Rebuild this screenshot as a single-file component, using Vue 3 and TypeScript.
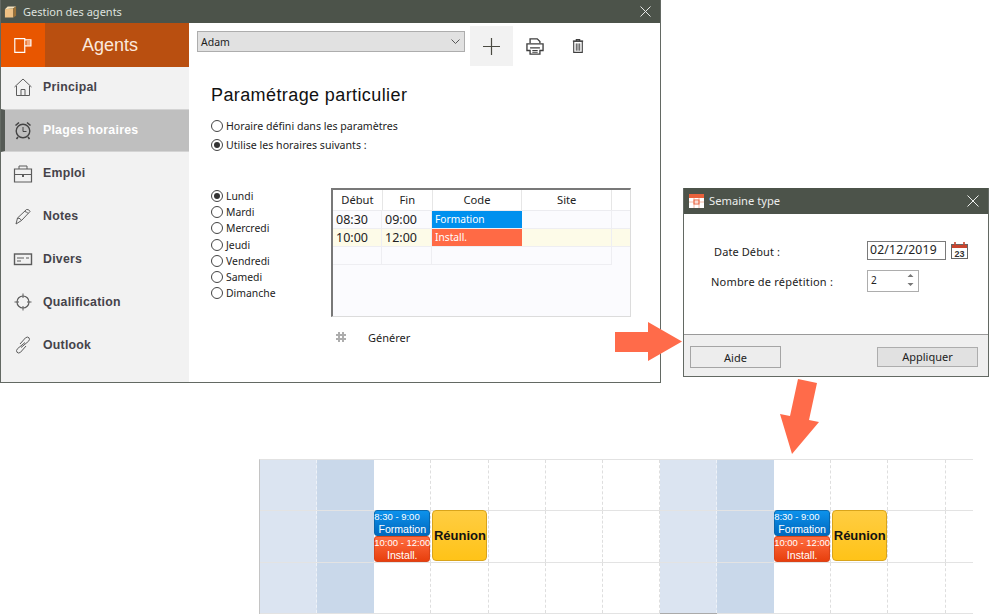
<script setup lang="ts">
interface NavItem { label: string; icon: string; active?: boolean }
const nav: NavItem[] = [
  { label: 'Principal', icon: 'home' },
  { label: 'Plages horaires', icon: 'clock', active: true },
  { label: 'Emploi', icon: 'case' },
  { label: 'Notes', icon: 'pen' },
  { label: 'Divers', icon: 'card' },
  { label: 'Qualification', icon: 'target' },
  { label: 'Outlook', icon: 'link' },
]
const modes = [
  { label: 'Horaire défini dans les paramètres', on: false },
  { label: 'Utilise les horaires suivants :', on: true },
]
const days = ['Lundi', 'Mardi', 'Mercredi', 'Jeudi', 'Vendredi', 'Samedi', 'Dimanche']
const rows = [
  { start: '08:30', end: '09:00', code: 'Formation', kind: 'blue', tint: false },
  { start: '10:00', end: '12:00', code: 'Install.', kind: 'orange', tint: true },
  { start: '', end: '', code: '', kind: '', tint: false },
]
const cols = Array.from({ length: 14 }, (_, i) => i)
const weekendA = new Set([0, 7])
const weekendB = new Set([1, 8])
const eventCols = new Set([2, 9])
const meetingCols = new Set([3, 10])
const gridRows = [0, 1, 2]
</script>

<template>
  <div class="desk">
    <section class="win main">
      <header class="bar">
        <svg class="bar-ico" width="13" height="14" viewBox="0 0 14 14">
          <path d="M1 4 L10 3 V13 L1 13 Z" fill="#eec184" />
          <path d="M1 4 L4 1 L13 1 L10 3 Z" fill="#f6e3bd" />
          <path d="M10 3 L13 1 V11 L10 13 Z" fill="#9c7238" />
        </svg>
        <span class="bar-title small">Gestion des agents</span>
        <svg class="close" width="11" height="11" viewBox="0 0 11 11"><path d="M.5.5l10 10M10.5.5l-10 10" stroke="#e6e8e6" stroke-width="1" fill="none" /></svg>
      </header>
      <div class="main-body">
        <aside class="side">
          <div class="brand">
            <div class="brand-ico">
              <svg width="18" height="15" viewBox="0 0 20 17" fill="none" stroke="#fff" stroke-width="1.3">
                <path d="M.7.7H12V16.3H.7ZM12 2.2H19V9H12M14 4.5H19M14 6.8H19" />
              </svg>
            </div>
            <div class="brand-name">Agents</div>
          </div>
          <div v-for="n in nav" :key="n.label" class="nav" :class="{ active: n.active }">
            <span class="nav-ico">
              <svg width="22" height="22" viewBox="0 0 22 22" fill="none" stroke="#5c5c5c" stroke-width="1">
                <template v-if="n.icon === 'home'">
                  <path d="M2.5 11 L11 3 L19.5 11" />
                  <path d="M4.5 10 V19.5 H17.5 V10" />
                  <path d="M9 19.5 V13.5 H13 V19.5" />
                </template>
                <template v-else-if="n.icon === 'clock'">
                  <circle cx="11" cy="12" r="6.8" stroke-width="1.4" stroke="#444" />
                  <path d="M11 8 V12.5 H14.5" stroke="#444" />
                  <path d="M3.5 6.5 L7 3.5 M18.5 6.5 L15 3.5 M6 18 L4.5 20 M16 18 L17.5 20" stroke-width="1.6" stroke="#444" />
                </template>
                <template v-else-if="n.icon === 'case'">
                  <path d="M2.5 7 H19.5 V20 H2.5 Z M2.5 12.5 H19.5" stroke-width="1.2" />
                  <path d="M7 7 V4 H15 V7" />
                  <path d="M10 14 H12" stroke-width="2" />
                </template>
                <template v-else-if="n.icon === 'pen'">
                  <path d="M4 19 L5.5 13 L14.5 4.5 Q17 4 18 6.5 L9.5 15.5 Z" />
                  <path d="M5.5 13 Q8.5 13 9.5 15.5 M12.5 6.5 Q15 6.5 16 8.5" />
                </template>
                <template v-else-if="n.icon === 'card'">
                  <rect x="2.5" y="6" width="17" height="10.5" stroke-width="1.4" />
                  <path d="M5 10 H12 M14 10 H17 M5 13 H9" />
                </template>
                <template v-else-if="n.icon === 'target'">
                  <circle cx="11" cy="11" r="6" stroke-width="1.2" />
                  <path d="M11 2.5 V7 M11 15 V19.5 M2.5 11 H7 M15 11 H19.5" />
                </template>
                <template v-else>
                  <path d="M8 10 L13.5 3.8 Q15.5 2.3 17 3.8 Q18.2 5.4 16.5 7.3 L9 13.5" />
                  <path d="M14 12 L8.5 18.3 Q6.5 19.8 5 18.3 Q3.8 16.6 5.5 14.7 L13 8.5" />
                </template>
              </svg>
            </span>
            <span class="nav-label">{{ n.label }}</span>
          </div>
        </aside>
        <div class="content">
          <div class="toolbar">
            <div class="select">
              <span class="adam dark">Adam</span>
              <svg width="9" height="5" viewBox="0 0 9 5"><path d="M.5.5l4 4 4-4" stroke="#555" fill="none" /></svg>
            </div>
            <button class="tool plus">
              <svg width="17" height="17" viewBox="0 0 17 17"><path d="M8.5 0V17M0 8.5H17" stroke="#4a4a42" stroke-width="1.2" /></svg>
            </button>
            <button class="tool">
              <svg width="18" height="17" viewBox="0 0 20 19" fill="none" stroke="#3f3f3f" stroke-width="1.5">
                <path d="M4.5 6 V1 H12.5 L15.5 4 V6" />
                <path d="M1 6.5 H19 V14 H15.5 V18 H4.5 V14 H1 Z" />
                <path d="M4.5 11 H15.5 M7 14 H13 M7 16 H13" stroke-width="1.2" />
              </svg>
            </button>
            <button class="tool">
              <svg width="12" height="16" viewBox="0 0 14 17" fill="none" stroke="#3f3f3f" stroke-width="1.3">
                <path d="M1 2.8 H13 M5 2.5 V1 H9 V2.5" />
                <path d="M2 3 V16 H12 V3 Z" />
                <path d="M5 5.5 V14 M7 5.5 V14 M9 5.5 V14" stroke-width="1.1" />
              </svg>
            </button>
          </div>
          <h1 class="heading">Paramétrage particulier</h1>
          <div class="modes">
            <label v-for="m in modes" :key="m.label" class="radio">
              <span class="dot" :class="{ on: m.on }"></span>{{ m.label }}
            </label>
          </div>
          <div class="split">
            <div class="days">
              <label v-for="(d, i) in days" :key="d" class="radio day">
                <span class="dot" :class="{ on: i === 0 }"></span>{{ d }}
              </label>
            </div>
            <div class="right">
              <div class="table">
                <div class="thead">
                  <div class="th c1">Début</div>
                  <div class="th c2">Fin</div>
                  <div class="th c3">Code</div>
                  <div class="th c4">Site</div>
                  <div class="th c5"></div>
                </div>
                <div v-for="(r, i) in rows" :key="i" class="tr" :class="{ tint: r.tint }">
                  <div class="td d1">{{ r.start }}</div>
                  <div class="td c2">{{ r.end }}</div>
                  <div class="td c3 code" :class="r.kind">{{ r.code }}</div>
                  <div class="td c4"></div>
                  <div v-if="i < 2" class="td c5 last"></div>
                </div>
              </div>
              <div class="gen">
                <svg width="12" height="12" viewBox="0 0 12 12" fill="none" stroke="#adadad" stroke-width="2">
                  <path d="M4 1V11M8 1V11M1 4H11M1 8H11" />
                </svg>
                <span class="small dark">Générer</span>
              </div>
            </div>
          </div>
        </div>
      </div>
    </section>

    <section class="win dialog">
      <header class="bar dbar">
        <svg class="bar-ico" width="15" height="14" viewBox="0 0 15 14">
          <rect width="15" height="14" fill="#fff" />
          <rect width="15" height="4" fill="#e8613c" />
          <path d="M0 8H15M5 4V14M10 4V14" stroke="#f0b7a5" />
          <rect x="5" y="6" width="5" height="4" fill="none" stroke="#e8613c" />
        </svg>
        <span class="dbar-title">Semaine type</span>
        <svg class="close" width="12" height="12" viewBox="0 0 12 12"><path d="M.5.5l11 11M11.5.5l-11 11" stroke="#eef0ee" stroke-width="1" fill="none" /></svg>
      </header>
      <div class="dbody">
        <div class="drow first">
          <span class="dlabel l1">Date Début :</span>
          <span class="date">02/12/2019</span>
          <svg class="cal" width="17" height="17" viewBox="0 0 17 17">
            <rect x=".5" y="2.5" width="16" height="14" fill="#fff" stroke="#666" />
            <rect x="1" y="3" width="15" height="3" fill="#c8452f" />
            <path d="M4 0V3M13 0V3" stroke="#c8452f" stroke-width="1.6" />
            <text x="8.5" y="15" text-anchor="middle" class="cal-num">23</text>
          </svg>
        </div>
        <div class="drow second">
          <span class="dlabel l2">Nombre de répétition :</span>
          <span class="spin">
            <span>2</span>
            <svg width="7" height="14" viewBox="0 0 7 14"><path d="M3.5 1L6.5 4H.5ZM3.5 13L.5 10H6.5Z" fill="#777" /></svg>
          </span>
        </div>
      </div>
      <footer class="dfoot">
        <button class="btn aide">Aide</button>
        <button class="btn apply">Appliquer</button>
      </footer>
    </section>

    <svg class="arrows" width="1000" height="615" viewBox="0 0 1000 615">
      <path d="M615 332H648V322L682 341.5L648 361V352H615Z" fill="#ff6b4a" />
      <path d="M798 379L817 383L809 420L819 422L792 454L780 414L790 416Z" fill="#ff6b4a" />
    </svg>

    <div class="cal-grid">
      <div v-for="r in gridRows" :key="r" class="grow" :class="'r' + r">
        <div
          v-for="c in cols"
          :key="c"
          class="gcell"
          :class="{ wa: weekendA.has(c), wb: weekendB.has(c), edge: r === 2 && c === 7 }"
        >
          <div v-if="r === 1 && eventCols.has(c)" class="events">
            <div class="ev blue">
              <span class="t">8:30 - 9:00</span>
              <span>Formation</span>
            </div>
            <div class="ev orange">
              <span class="t">10:00 - 12:00</span>
              <span>Install.</span>
            </div>
          </div>
          <div v-if="r === 1 && meetingCols.has(c)" class="meeting">Réunion</div>
        </div>
      </div>
    </div>
  </div>
</template>

<style>
html, body { margin: 0; background: #fff; }
</style>

<style scoped>
.desk { position: relative; width: 1000px; height: 615px; overflow: hidden; background: #fff; font-family: "Noto Sans", sans-serif; }
.win { position: absolute; box-sizing: border-box; border: 1px solid #636963; border-top: 0; background: #fff; display: flex; flex-direction: column; }
.main { left: 0; top: 0; width: 661px; height: 383px; }
.dialog { left: 683px; top: 188px; width: 306px; height: 189px; }
.arrows { position: absolute; left: 0; top: 0; pointer-events: none; }
.bar { height: 23px; flex: none; background: #4c534a; display: flex; align-items: center; padding: 0 9px 0 3px; }
.bar-ico { margin-right: 6px; }
.bar-title { color: #dfe2df; font-size: 10.5px; }
.close { margin-left: auto; }
.small { font-size: 11px; }
.adam { font-size: 10.5px; }
.dark { color: #1c1c1c; }
.main-body { flex: 1; display: flex; min-height: 0; }
.side { width: 188px; flex: none; background: #f2f2f2; display: flex; flex-direction: column; }
.brand { height: 44px; display: flex; margin-bottom: -1px; }
.brand-ico { width: 44px; background: #e85600; display: flex; align-items: center; justify-content: center; }
.brand-name { flex: 1; background: #b94f10; color: #fbe9dd; font: 18px/45px "Liberation Sans", sans-serif; text-align: center; padding-right: 14px; }
.nav { height: 43px; flex: none; box-sizing: border-box; display: flex; align-items: center; padding: 0 0 1px 11px; }
.nav.active { background: #bfbfbf; border-left: 4px solid #555a55; padding: 0 0 2px 7px; border-top: 1px solid #d4d4d4; border-bottom: 1px solid #d4d4d4; }
.nav-ico { width: 22px; height: 22px; margin-right: 9px; display: block; }
.nav-label { font: bold 12.3px "Liberation Sans", sans-serif; letter-spacing: .25px; color: #45434a; }
.nav.active .nav-label { color: #fff; }
.content { flex: 1; min-width: 0; padding-left: 8px; display: flex; flex-direction: column; }
.toolbar { display: flex; align-items: flex-start; height: 43px; padding-top: 3px; box-sizing: border-box; }
.select { width: 268px; height: 21px; margin-top: 5px; box-sizing: border-box; background: #e1e1e1; border: 1px solid #adadad; display: flex; align-items: center; justify-content: space-between; padding: 0 4px 0 3px; }
.tool { width: 43px; height: 40px; border: 0; padding: 0; background: none; display: flex; align-items: center; justify-content: center; }
.plus { margin-left: 5px; background: #f2f2f2; }
.heading { margin: 17px 0 0 14px; font: 400 18px/24px "Liberation Sans", sans-serif; color: #111; letter-spacing: .4px; }
.modes { margin: 11px 0 0 14px; display: flex; flex-direction: column; gap: 3px; }
.radio { display: flex; align-items: center; height: 16px; font-size: 10.6px; color: #222; }
.dot { width: 10px; height: 10px; border: 1px solid #444; border-radius: 50%; margin-right: 3px; position: relative; flex: none; background: #fff; }
.dot.on::after { content: ""; position: absolute; inset: 2px; border-radius: 50%; background: #333; }
.split { display: flex; margin-top: 35px; }
.days { margin: 0 0 0 14px; width: 120px; display: flex; flex-direction: column; }
.day { height: 16.2px; font-size: 10.4px; }
.right { display: flex; flex-direction: column; }
.table { width: 300px; height: 129px; box-sizing: border-box; border: 2px solid #787878; border-right: 1px solid #dcdcdc; border-bottom: 1px solid #dcdcdc; background: #fbfbfe; font-size: 11.2px; color: #222; }
.thead { display: flex; height: 21px; background: #fff; border-bottom: 1px solid #ececf0; box-sizing: border-box; }
.th { box-sizing: border-box; text-align: center; line-height: 19px; border-right: 1px solid #e6e6e6; }
.c1 { width: 50px; }
.d1 { width: 49px; }
.c2 { width: 50px; }
.c3 { width: 90px; }
.c4 { width: 90px; }
.c5 { width: 18px; }
.th.c5 { border-right: 0; }
.tr { display: flex; height: 18px; box-sizing: border-box; }
.tr.tint { background: #fdfbe8; }
.td { box-sizing: border-box; border-right: 1px solid #eeeef2; border-bottom: 1px solid #eeeef2; padding-left: 3px; font-size: 12.5px; line-height: 17px; }
.td.last { border-right: 0; }
.code { color: #fff; font-size: 10.2px; line-height: 16px; border-right: 0; }
.code.blue { background: #0090ee; }
.code.orange { background: #ff6a45; }
.gen { display: flex; align-items: center; height: 16px; margin: 12px 0 0 4px; }
.gen span { margin-left: 21px; }
.dbar { height: 26px; padding: 0 9px 1px 5px; box-sizing: border-box; }
.dbar .bar-ico { margin-right: 5px; }
.dbar-title { color: #eceeec; font-size: 11.2px; }
.dbody { flex: 1; position: relative; display: flex; flex-direction: column; }
.drow { display: flex; align-items: center; font-size: 11px; color: #222; }
.first { margin-top: 27px; height: 19px; }
.second { margin-top: 10px; height: 22px; }
.dlabel { display: block; letter-spacing: .1px; }
.l1 { margin-left: 30px; width: 153px; padding-top: 1px; }
.l2 { margin-left: 27px; width: 156px; letter-spacing: .2px; }
.date { width: 79px; height: 19px; box-sizing: border-box; border: 1px solid #7a7a7a; padding-left: 2px; line-height: 16px; font-size: 12.2px; letter-spacing: .2px; }
.cal { margin-left: 5px; }
.cal-num { font: bold 9px "Liberation Sans", sans-serif; fill: #333; }
.spin { width: 52px; height: 22px; box-sizing: border-box; border: 1px solid #adadad; display: flex; align-items: center; justify-content: space-between; padding: 0 4px 2px 3px; font-size: 10px; }
.dfoot { height: 42px; flex: none; box-sizing: border-box; background: #efefef; border-top: 1px solid #9a9a9a; position: relative; display: flex; justify-content: space-between; padding: 11px 10px 0 6px; align-items: flex-start; }
.btn { box-sizing: border-box; font: 11px "Noto Sans", sans-serif; color: #222; padding: 0; }
.aide { width: 91px; height: 22px; background: #ededed; border: 1px solid #a5a5a5; }
.apply { width: 101px; height: 20px; margin-top: 1px; padding-bottom: 2px; background: #e1e1e1; border: 1px solid #adadad; }
.cal-grid { position: absolute; left: 259px; top: 459px; width: 714px; height: 155px; overflow: hidden; border-top: 1px solid #e2e2e2; border-left: 1px solid #c4c4c4; box-sizing: border-box; }
.grow { display: flex; box-sizing: border-box; border-bottom: 1px solid #e3e3e3; }
.r0 { height: 51px; }
.r1 { height: 52px; }
.r2 { height: 51px; }
.gcell { width: 57.14px; flex: none; box-sizing: border-box; border-right: 1px dashed #dedede; position: relative; }
.wa { background: #dbe4f1; border-right-color: #eef2f8; }
.wb { background: #c9d8ea; border-right-color: #c9d8ea; }
.edge { box-shadow: 0 1px 0 #aaa; }
.events { position: absolute; left: 0; top: -1px; width: 56px; height: 52px; z-index: 1; display: flex; flex-direction: column; }
.ev { height: 26px; box-sizing: border-box; border-radius: 3px; color: #fff; font: 10.6px/12px "Liberation Sans", sans-serif; text-align: center; display: flex; flex-direction: column; white-space: nowrap; }
.ev .t { font-size: 9.5px; line-height: 12px; text-align: left; margin: 0 -1px; }
.ev.blue { background: linear-gradient(#0c92ec, #0068be); border: 1px solid #0a68ac; }
.ev.orange { background: linear-gradient(#ff6d40, #e73f0d); border: 1px solid #d9441a; }
.meeting { position: absolute; left: 1px; top: -1px; width: 55px; height: 51px; z-index: 1; box-sizing: border-box; border: 1px solid #d9a41a; border-radius: 4px; background: linear-gradient(#ffcd42, #ffc318); font: bold 13px/49px "Liberation Sans", sans-serif; text-align: center; color: #111; white-space: nowrap; }
</style>
